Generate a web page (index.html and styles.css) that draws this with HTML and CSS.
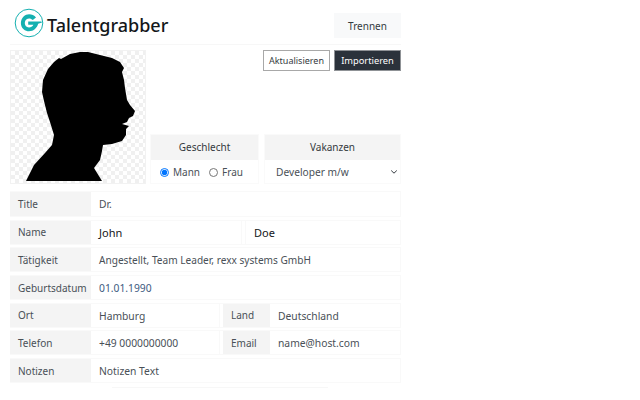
FILE: index.html
```html
<!DOCTYPE html>
<html lang="de">
<head>
    <meta charset="UTF-8">
    <title>Talentgrabber</title>
    <link rel="stylesheet" href="styles.css">
</head>
<body>
<div class="app">
    <header class="top">
        <div class="brand">
            <svg class="logo" width="30" height="30" viewBox="0 0 30 30">
                <circle cx="15" cy="15" r="13.8" fill="none" stroke="#14b0b0" stroke-width="1"/>
                <path d="M22 9.5C19 5.8 13 5.3 9.6 8.4C6 11.8 6 18 9.6 21.2C13 24.2 18 23.6 21 21C22.5 19.6 23.6 18 24.2 15.8L28 14.5L27.4 13.4L14.2 13.4L14.2 16.7L19.4 16.7C18.2 19.2 15 20.3 12.8 18.8C10.4 17.2 10.2 13.2 12.3 11.4C14.3 9.8 17 10.2 18.8 12Z" fill="#14b0b0"/>
            </svg>
            <span class="brand-name">Talentgrabber</span>
        </div>
        <button class="btn btn-light">Trennen</button>
    </header>

    <section class="profile">
        <div class="photo">
            <svg width="134" height="132" viewBox="11 51 134 132">
                <path d="M80 52L88 52L100 55L112 58L120 62L124 68L122 72L124 80L125 88L127 100L130 105L135 111L133 116L129 118L127 122L122 124L129 126L126 129L126 135L122 141L112 144L103 145L102 151L100 160L94 168L102 181L26 181L34 165L45 153L52 145L54 135L50 122L47 113L44 101L42 92L43 80L48 69L54 62L59 58L61 59L70 54Z" fill="#000"/>
            </svg>
        </div>
        <div class="side">
            <div class="actions">
                <button class="btn btn-outline">Aktualisieren</button>
                <button class="btn btn-dark">Importieren</button>
            </div>
            <div class="choices">
                <div class="choice choice-gender">
                    <div class="choice-head">Geschlecht</div>
                    <div class="choice-body radios">
                        <label class="radio"><input type="radio" name="g" checked>Mann</label>
                        <label class="radio"><input type="radio" name="g">Frau</label>
                    </div>
                </div>
                <div class="choice choice-job">
                    <div class="choice-head">Vakanzen</div>
                    <div class="choice-body select">
                        <span>Developer m/w</span>
                        <svg width="8" height="6" viewBox="0 0 8 6"><path d="M1.2 1.5L4 4.2L6.8 1.5" fill="none" stroke="#343a40" stroke-width="1"/></svg>
                    </div>
                </div>
            </div>
        </div>
    </section>

    <section class="form">
        <div class="row row-first">
            <div class="cell"><div class="label">Title</div><div class="value">Dr.</div></div>
        </div>
        <div class="row">
            <div class="cell cell-name"><div class="label">Name</div><div class="value value-strong">John</div></div>
            <div class="cell"><div class="value value-strong">Doe</div></div>
        </div>
        <div class="row">
            <div class="cell"><div class="label">Tätigkeit</div><div class="value value-long">Angestellt, Team Leader, rexx systems GmbH</div></div>
        </div>
        <div class="row">
            <div class="cell"><div class="label">Geburtsdatum</div><div class="value value-blue">01.01.1990</div></div>
        </div>
        <div class="row">
            <div class="cell cell-half"><div class="label">Ort</div><div class="value">Hamburg</div></div>
            <div class="cell"><div class="label label-small">Land</div><div class="value">Deutschland</div></div>
        </div>
        <div class="row">
            <div class="cell cell-half"><div class="label">Telefon</div><div class="value">+49 0000000000</div></div>
            <div class="cell"><div class="label label-small">Email</div><div class="value">name@host.com</div></div>
        </div>
        <div class="row">
            <div class="cell"><div class="label">Notizen</div><div class="value">Notizen Text</div></div>
        </div>
    </section>
    <div class="foot-line"></div>
</div>
</body>
</html>
```

FILE: styles.css
```css
*{margin:0;padding:0;box-sizing:border-box}
body{font:400 10px/1 "Noto Sans","Open Sans",sans-serif;color:#343a40;background:#fff}
.app{width:391px;margin-left:10px}

.top{height:45px;padding-top:8px;display:flex;justify-content:space-between;align-items:flex-start;border-bottom:1px solid #f7f7f7}
.brand{display:flex;align-items:center;margin-left:4px;height:30px}
.logo{display:block}
.brand-name{margin-left:3px;font-size:18px;font-weight:500;color:#14171a;padding-top:4px}

.btn{font:400 10px/1 "Noto Sans","Open Sans",sans-serif;border:none;background:none;color:#343a40}
.btn-light{width:67px;height:25px;margin-top:5px;background:#f8f9fa}
.btn-outline{width:67px;height:21px;background:#fff;border:1px solid #a8a8a8;font-size:9px}
.btn-dark{width:67px;height:21px;background:#2b323b;color:#fff;border:1px solid #8f9296;font-size:9.3px}

.profile{display:flex;margin-top:5px;height:134px}
.photo{width:136px;height:134px;border:1px solid #f2f2f2;
    background-color:#fff;
    background-image:conic-gradient(#f0f0f0 25%,#fff 0 50%,#f0f0f0 0 75%,#fff 0);
    background-size:8px 8px}
.photo svg{display:block}
.side{flex:1;margin-left:4px;display:flex;flex-direction:column;justify-content:space-between}
.actions{display:flex;justify-content:flex-end;gap:4px}
.choices{display:flex;gap:5px}
.choice{height:50px;border:1px solid #fafafa}
.choice-gender{width:109px}
.choice-job{flex:1}
.choice-head{height:25px;background:#f4f4f4;text-align:center;line-height:25px;font-size:10px}
.choice-body{height:24px;display:flex;align-items:center}
.radios{padding-left:9px;gap:9px}
.radio{display:flex;align-items:center;font-size:10px;color:#495057}
.radio input{width:9px;height:9px;margin-right:4px}
.select{justify-content:space-between;padding:0 2px 0 11px;font-size:10.2px;color:#495057}

.form{margin-top:7px}
.row{display:flex;height:25px;margin-bottom:2.7px;border:1px solid #f9f9f9;border-left:none}
.row-first{height:26px}
.cell{display:flex;flex:1;align-items:stretch}
.cell-name{flex:none;width:232px;border-right:1px solid #f9f9f9}
.cell-half{flex:none;width:210px;border-right:1px solid #f9f9f9}
.cell-name + .cell{margin-left:3px;border-left:1px solid #f9f9f9}
.cell-half + .cell{margin-left:3px}
.label{width:81px;flex:none;background:#f4f4f4;padding-left:8px;display:flex;align-items:center;font-size:10px;color:#495057}
.label-small{width:47px}
.value{padding:1px 0 0 8px;display:flex;align-items:center;font-size:10.3px;color:#495057}
.value-strong{font-size:11px;color:#14171a}
.value-long{font-size:10.1px}
.value-blue{color:#3d5a80}
.foot-line{width:216px;height:1px;margin:4px 0 0 102px;background:#f7f7f7}
```
